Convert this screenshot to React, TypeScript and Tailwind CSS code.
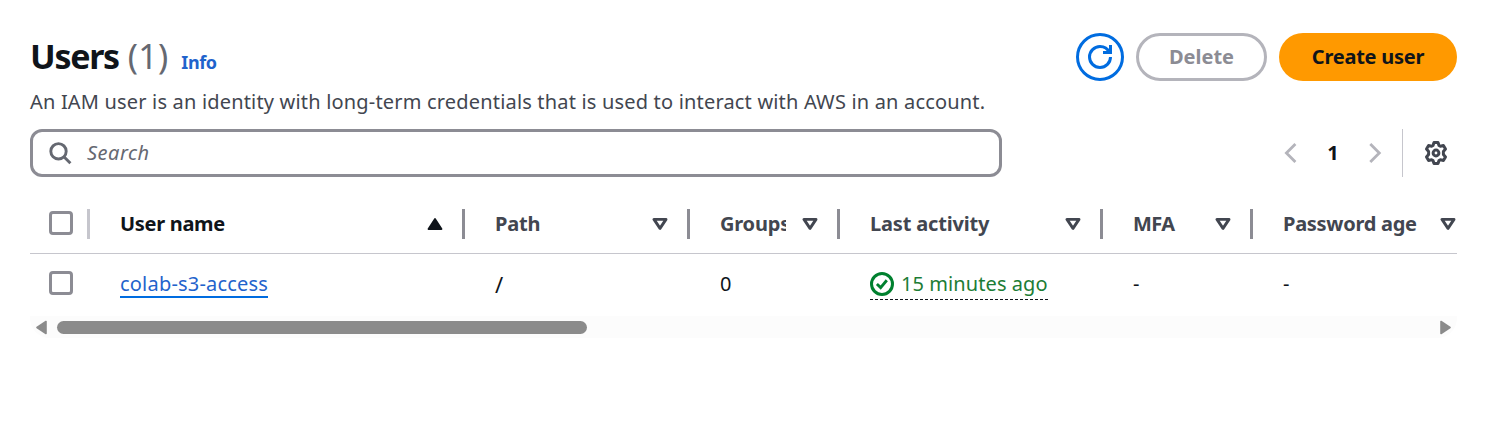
import type { ReactNode } from "react";

type Column = {
  label: string;
  width: string;
  labelClass: string;
  sorted?: boolean;
  cell: ReactNode;
};

function SortIcon({ filled }: { filled?: boolean }) {
  return filled ? (
    <svg className="h-[14px] w-[16px] shrink-0" viewBox="0 0 16 14">
      <path d="M8 2 14.5 12h-13z" fill="#0f141a" stroke="#0f141a" strokeWidth="1.8" strokeLinejoin="round" />
    </svg>
  ) : (
    <svg className="h-[14px] w-[16px] shrink-0" viewBox="0 0 16 14">
      <path d="M2 2.4h12L8 11.4z" fill="none" stroke="#424650" strokeWidth="2.9" strokeLinejoin="round" />
    </svg>
  );
}

function RefreshIcon() {
  return (
    <svg className="size-6 overflow-visible" viewBox="0 0 16 16" fill="none" stroke="#006ce0" strokeWidth="2">
      <path d="M15 8c0 3.87-3.13 7-7 7s-7-3.13-7-7 3.13-7 7-7c2.79 0 5.2 1.63 6.33 4" />
      <path d="M10 5h5V0" />
    </svg>
  );
}

function SearchIcon() {
  return (
    <svg className="size-6" viewBox="0 0 24 24" fill="none" stroke="#656871" strokeWidth="2.9">
      <circle cx="9.5" cy="10.3" r="7.7" />
      <path d="M14.9 15.7l6.5 6.5" />
    </svg>
  );
}

function Chevron({ right }: { right?: boolean }) {
  return (
    <svg className="h-6 w-[14px]" viewBox="0 0 14 24" fill="none" stroke="#b4b4bb" strokeWidth="2.8">
      <path d={right ? "M2.300 3l9 9-9 9" : "M11.400 3l-9 9 9 9"} />
    </svg>
  );
}

function GearIcon() {
  return (
    <svg className="size-6" viewBox="0 0 24 24" fill="none" stroke="#424650" strokeWidth="3" strokeLinejoin="round">
      <path d="M10 1.500h4l1 2.900 1.400.8 3-.7 2.100 3.500-2.100 2.400v3.200l2.100 2.400-2.100 3.500-3-.7-1.400.8-1 2.900h-4l-1-2.900-1.400-.8-3 .7-2.100-3.500 2.100-2.400v-3.200L2.500 8l2.100-3.500 3 .7L9 4.400z" />
      <circle cx="12" cy="12" r="2.900" />
    </svg>
  );
}

function Checkbox() {
  return <span className="block size-6 rounded-[4px] border-3 border-[#8c8c94] bg-white" />;
}

function Divider({ className }: { className: string }) {
  return <span className={`h-[30px] w-[3px] shrink-0 ${className}`} />;
}

const columns: Column[] = [
  {
    label: "User name",
    width: "w-[375px]",
    labelClass: "tracking-[-0.3px]",
    sorted: true,
    cell: (
      <a className="h-[27px] border-b-2 border-[#006ce0] leading-[26px] tracking-[0.2px] text-[#1f63cc]">colab-s3-access</a>
    ),
  },
  { label: "Path", width: "w-[225px]", labelClass: "tracking-[-0.2px]", cell: <span className="text-[22px]">/</span> },
  { label: "Groups", width: "w-[150px]", labelClass: "tracking-[-0.2px]", cell: "0" },
  {
    label: "Last activity",
    width: "w-[263px]",
    labelClass: "tracking-[-0.17px]",
    cell: (
      <span className="mt-px flex h-[31px] items-center border-b border-dashed border-[#0f141a] pb-[1px] text-[#1c7c35]">
        <svg className="mr-[7px] size-6" viewBox="0 0 16 16" fill="none" stroke="#00802f" strokeWidth="2">
          <circle cx="8" cy="8" r="7" />
          <path d="M4.600 8l2.500 2.400 4.100-4.900" strokeWidth="1.900" />
        </svg>
        <span className="tracking-[0.08px]">15 minutes ago</span>
      </span>
    ),
  },
  { label: "MFA", width: "w-[150px]", labelClass: "tracking-[-0.6px]", cell: <span>-</span> },
  { label: "Password age", width: "w-[225px]", labelClass: "tracking-[-0.28px]", cell: <span>-</span> },
];

export default function App() {
  return (
    <main className="h-[427px] w-[1492px] overflow-hidden bg-white pt-[33px] pr-[35px] pl-[30px] font-['Noto_Sans',sans-serif] text-[20px] text-[#0f141a]">
      <header className="flex h-12 justify-between">
        <div className="-mt-px flex items-baseline whitespace-nowrap">
          <h1 className="text-[34px] leading-[48px] font-bold tracking-[-1.3px]">Users</h1>
          <span className="ml-[9px] text-[34px] leading-[48px] tracking-[0.2px] text-[#656871]">(1)</span>
          <a className="ml-[13px] text-[18px] font-bold tracking-[-0.4px] text-[#1f63cc]">Info</a>
        </div>
        <div className="flex gap-3 font-bold">
          <button className="flex size-12 items-center justify-center rounded-full border-3 border-[#006ce0]">
            <RefreshIcon />
          </button>
          <button className="flex h-12 w-[131px] items-center justify-center rounded-full border-3 border-[#b4b4bb] text-[#8c8c94]">
            Delete
          </button>
          <button className="flex h-12 w-[178px] items-center justify-center rounded-full bg-[#ff9900] tracking-[-0.25px]">Create user</button>
        </div>
      </header>
      <p className="mt-[6px] h-[30px] leading-[30px] tracking-[0.18px] whitespace-nowrap text-[#424650]">
        An IAM user is an identity with long-term credentials that is used to interact with AWS in an account.
      </p>
      <div className="mt-3 flex h-12 justify-between">
        <div className="flex w-[972px] items-center gap-[14px] rounded-[12px] border-3 border-[#8c8c94] pl-[16px] tracking-[0.5px] text-[#656871] italic">
          <SearchIcon />
          <span>Search</span>
        </div>
        <div className="flex items-center pr-[9px]">
          <Chevron />
          <span className="w-[70px] text-center font-bold">1</span>
          <Chevron right />
          <span className="ml-[20px] h-12 w-px bg-[#c6c6cd]" />
          <span className="ml-[21px]">
            <GearIcon />
          </span>
        </div>
      </div>
      <section className="mt-[17px] w-[1427px] overflow-hidden">
        <div className="flex h-[60px] w-max items-center border-b border-[#c6c6cd] whitespace-nowrap">
          <div className="flex h-[30px] w-[60px] justify-between pl-[19px]">
            <div className="pt-[2px]">
              <Checkbox />
            </div>
            <Divider className="bg-[#c6c6cd]" />
          </div>
          {columns.map((column) => (
            <div key={column.label} className={`flex shrink-0 items-center pl-[30px] font-bold ${column.width}`}>
              <span className={`mr-[16px] min-w-0 flex-1 overflow-hidden ${column.labelClass} ${column.sorted ? "" : "text-[#424650]"}`}>
                {column.label}
              </span>
              <SortIcon filled={column.sorted} />
              <Divider className="ml-[19px] bg-[#8c8c94]" />
            </div>
          ))}
        </div>
        <div className="flex h-[62px] w-max items-center pb-[2px] whitespace-nowrap">
          <div className="w-[60px] pb-[3px] pl-[19px]">
            <Checkbox />
          </div>
          {columns.map((column) => (
            <div key={column.label} className={`flex h-full shrink-0 items-center pl-[30px] ${column.width}`}>
              {column.cell}
            </div>
          ))}
        </div>
      </section>
      <div className="flex h-[22px] w-[1427px] items-center justify-between rounded-b-[20px] bg-[#fcfcfc] px-[6px]">
        <div className="flex items-center gap-[10px]">
          <svg className="h-[15px] w-[11px]" viewBox="0 0 11 15">
            <path d="M10 1.500v12L1 7.500z" fill="#8b8b8b" stroke="#8b8b8b" strokeWidth="1.600" strokeLinejoin="round" />
          </svg>
          <span className="h-[13px] w-[530px] rounded-full bg-[#8b8b8b]" />
        </div>
        <svg className="h-[15px] w-[11px]" viewBox="0 0 11 15">
          <path d="M1 1.500v12l9-6z" fill="#8b8b8b" stroke="#8b8b8b" strokeWidth="1.600" strokeLinejoin="round" />
        </svg>
      </div>
    </main>
  );
}
